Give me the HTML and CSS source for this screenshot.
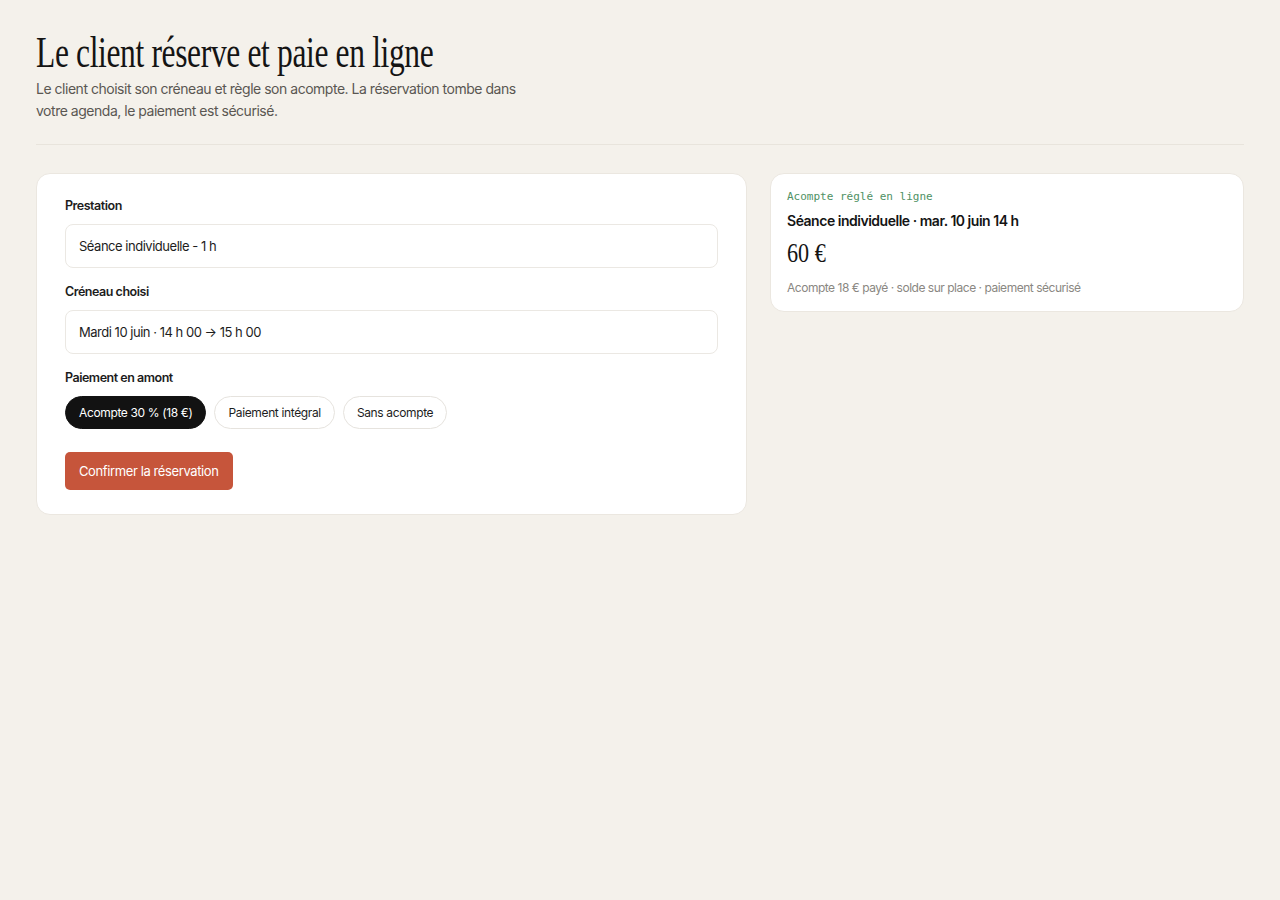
FILE: index.html
```html
<!DOCTYPE html>
<html lang="fr">

<head>
    <meta charset="UTF-8">
    <meta name="viewport" content="width=device-width, initial-scale=1.0">
    <title>Réservation en ligne</title>
    <link rel="stylesheet" href="styles.css">
</head>

<body>
    <div class="page">
        <header class="intro">
            <h1 class="title">Le client réserve et paie en ligne</h1>
            <p class="lead">Le client choisit son créneau et règle son acompte. La réservation tombe dans
                votre agenda, le paiement est sécurisé.</p>
        </header>

        <hr class="divider">

        <div class="layout">
            <form class="card booking" id="bookingForm">
                <div class="field">
                    <label for="service">Prestation</label>
                    <div class="input" id="service">Séance individuelle - 1 h</div>
                </div>

                <div class="field">
                    <label for="slot">Créneau choisi</label>
                    <div class="input" id="slot">Mardi 10 juin · 14 h 00 → 15 h 00</div>
                </div>

                <div class="field">
                    <label>Paiement en amont</label>
                    <div class="pills">
                        <button type="button" class="pill active">Acompte 30 % (18 €)</button>
                        <button type="button" class="pill">Paiement intégral</button>
                        <button type="button" class="pill">Sans acompte</button>
                    </div>
                </div>

                <button type="submit" class="confirm">Confirmer la réservation</button>
            </form>

            <aside class="card receipt">
                <div class="receipt-tag">Acompte réglé en ligne</div>
                <div class="receipt-title">Séance individuelle · mar. 10 juin 14 h</div>
                <div class="receipt-price"><span>60 €</span></div>
                <div class="receipt-note">Acompte 18 € payé · solde sur place · paiement sécurisé</div>
            </aside>
        </div>
    </div>
</body>

</html>
```

FILE: styles.css
```css
body {
    margin: 0;
    background: #f4f1eb;
    font-family: Inter, "Noto Sans", sans-serif;
    letter-spacing: -0.03em;
    color: #161616;
}

.page {
    padding: 30px 36px;
}

.title {
    display: inline-block;
    margin: 0 0 4px;
    font-family: "Liberation Serif", serif;
    font-weight: 400;
    font-size: 45px;
    line-height: 44px;
    letter-spacing: -0.5px;
    transform: scaleX(0.7);
    transform-origin: left center;
    color: #141414;
}

.lead {
    margin: 0;
    max-width: 500px;
    font-size: 14px;
    line-height: 22px;
    color: #5a5752;
}

.divider {
    margin: 22px 0 28px;
    border: none;
    border-top: 1px solid #e8e4dc;
}

.layout {
    display: grid;
    grid-template-columns: 3fr 2fr;
    gap: 23px;
    align-items: start;
}

.card {
    background: #fff;
    border: 1px solid #ebe7e0;
    border-radius: 14px;
}

.booking {
    padding: 24px 28px;
}

.field {
    margin-bottom: 16px;
}

label {
    display: block;
    margin-bottom: 10px;
    font-size: 12.5px;
    line-height: 16px;
    font-weight: 600;
    color: #1c1c1c;
}

.input {
    height: 44px;
    box-sizing: border-box;
    padding: 0 13px;
    display: flex;
    align-items: center;
    border: 1px solid #ebe8e3;
    border-radius: 8px;
    font-size: 13px;
    color: #1d1d1d;
}

.pills {
    display: flex;
    gap: 8px;
}

.pill {
    height: 33px;
    padding: 0 13px;
    border: 1px solid #e6e3de;
    border-radius: 999px;
    background: #fff;
    font-family: inherit;
    font-size: 12px;
    letter-spacing: -0.03em;
    color: #1d1d1d;
    cursor: pointer;
}

.pill.active {
    background: #121212;
    border-color: #121212;
    color: #fff;
}

.confirm {
    margin-top: 7px;
    height: 38px;
    padding: 0 14px;
    border: none;
    border-radius: 5px;
    background: #c6553b;
    color: #fff;
    font-family: inherit;
    font-size: 13px;
    letter-spacing: -0.03em;
    cursor: pointer;
}

.receipt {
    padding: 16px 16px 14px;
}

.receipt-tag {
    font-family: "DejaVu Sans Mono", "Liberation Mono", monospace;
    font-size: 11px;
    line-height: 14px;
    letter-spacing: 0;
    color: #4f9164;
}

.receipt-title {
    margin-top: 7px;
    font-size: 14px;
    line-height: 20px;
    font-weight: 600;
    color: #141414;
}

.receipt-price {
    margin-top: 7px;
    font-family: "Liberation Serif", serif;
    font-size: 27px;
    line-height: 30px;
    letter-spacing: 0;
    color: #141414;
}

.receipt-price span {
    display: inline-block;
    transform: scaleX(0.82);
    transform-origin: left center;
}

.receipt-note {
    margin-top: 11px;
    font-size: 12px;
    line-height: 18px;
    color: #8a8782;
}
```
